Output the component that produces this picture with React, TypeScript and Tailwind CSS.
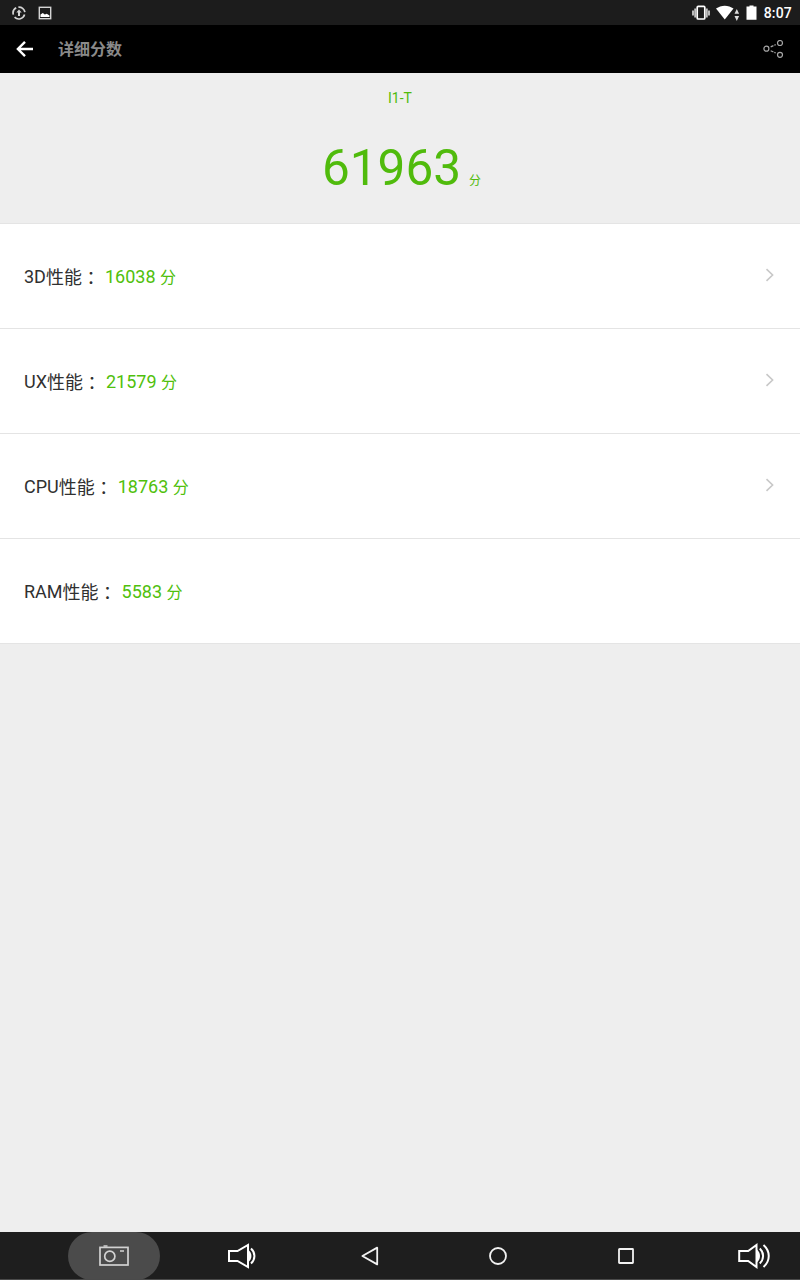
const scores = [
  { label: "3D", value: "16038", more: true },
  { label: "UX", value: "21579", more: true },
  { label: "CPU", value: "18763", more: true },
  { label: "RAM", value: "5583", more: false },
];

function StatusBar() {
  return (
    <div className="flex h-[25px] items-center justify-between bg-[#1c1c1c] text-white">
      <div className="flex items-center gap-3 pl-3">
        {/* Sync */}
        <svg width="14" height="14" viewBox="0 0 14 14" fill="none" stroke="#d4d4d4" strokeWidth="1.7">
          <path d="M1.3 8.6A6 6 0 0 1 4.2 1.8M6.4 1.1A6 6 0 0 1 12.9 6.2M12.6 8.6A6 6 0 0 1 2.6 11.2" />
          <path d="M7 10V5.5" strokeWidth="2" />
          <path d="M4.3 6.4 7 3.6l2.7 2.8z" fill="#d4d4d4" stroke="none" />
        </svg>
        {/* Picture */}
        <svg width="14" height="14" viewBox="0 0 14 14" fill="none">
          <rect x="1.3" y="1.3" width="11.4" height="11.4" stroke="#d4d4d4" strokeWidth="1.4" />
          <path d="M2.5 11V8.5L4.8 7l2 1.5 2-.7 2.7 1.7V11z" fill="#fff" />
        </svg>
      </div>
      <div className="flex items-center pr-2">
        {/* Vibrate */}
        <svg width="18" height="16" viewBox="0 0 18 16" fill="none">
          <path d="M1 5.5v5M3.2 3.5v9M14.8 3.5v9M17 5.5v5" stroke="#c4c4c4" strokeWidth="1.9" />
          <rect x="5.2" y="1.4" width="7.6" height="12.6" rx="1" stroke="#fff" strokeWidth="1.7" />
        </svg>
        {/* Wifi */}
        <svg className="ml-1.5" width="24" height="18" viewBox="0 0 24 18" fill="#fff">
          <path d="M0 4.6C5 .7 12.5 .7 17.5 4.6L8.75 15.6z" />
          <path d="M18.5 9.8 20.8 5l2.3 4.8zM18.5 12l2.3 5 2.3-5z" fill="#ddd" />
        </svg>
        {/* Battery */}
        <svg className="ml-[6px]" width="11" height="16" viewBox="0 0 11 16" fill="#fff">
          <path d="M.5 1.6h3V.4h4v1.2h3v13.2H.5z" />
        </svg>
        <span className="ml-[7px] mt-px text-[14px] leading-none font-medium tracking-[0.2px]">8:07</span>
      </div>
    </div>
  );
}

function AppBar() {
  return (
    <div className="flex h-12 items-center bg-black px-4">
      <svg width="18" height="16" viewBox="0 0 18 16" fill="none" stroke="#fff" strokeWidth="2.4">
        <path d="M17 8H2M9 .9 1.9 8 9 15.1" />
      </svg>
      <h1 className="mt-0.5 ml-6 text-[16px] leading-none font-bold text-[#8a8a8a]">详细分数</h1>
      <svg className="ml-auto" width="21" height="18" viewBox="0 0 21 18" fill="none" stroke="#a6a6a6" strokeWidth="1.2">
        <circle cx="3.4" cy="8.7" r="2.5" />
        <circle cx="17" cy="3" r="2.5" />
        <circle cx="17" cy="14.8" r="2.5" />
        <path d="M7.7 6.9l5-2.3M7.7 10.7l5 2.3" strokeDasharray="3 1" />
      </svg>
    </div>
  );
}

function NavBar() {
  return (
    <nav className="flex h-12 overflow-hidden border-b border-[#4a4a4a] bg-[#1e1e1e] pl-[50px] *:flex *:w-32 *:shrink-0 *:items-center *:justify-center">
      <button>
        <span className="flex h-12 w-[92px] items-center justify-center rounded-full bg-[#4b4b4b]">
          <svg width="30" height="22" viewBox="0 0 30 22" fill="none" stroke="#d2d2d2" strokeWidth="1.7">
            <rect x="1" y="2.4" width="28" height="17.6" />
            <circle cx="10.8" cy="11.2" r="5.1" />
            <path d="M4.5 1h4M21 6h4" />
          </svg>
        </span>
      </button>
      <button>
        <svg width="28" height="26" viewBox="0 0 28 26" fill="none" stroke="#fff" strokeWidth="2">
          <path d="M1 8h8.5L20 2v22L9.5 18H1z" />
          <path d="M20 6.5c4.6 3.5 4.6 9.5 0 13z" fill="#fff" stroke="none" />
          <path d="M23 5.5c4.6 4.2 4.6 10.8 0 15" />
        </svg>
      </button>
      <button>
        <svg width="18" height="20" viewBox="0 0 18 20" fill="none" stroke="#f2f2f2" strokeWidth="1.8" strokeLinejoin="round">
          <path d="M16.2 1.6v16.8L1.4 10z" />
        </svg>
      </button>
      <button>
        <svg width="18" height="18" viewBox="0 0 18 18" fill="none" stroke="#f2f2f2" strokeWidth="1.8">
          <circle cx="9" cy="9" r="8" />
        </svg>
      </button>
      <button>
        <svg width="16" height="16" viewBox="0 0 16 16" fill="none" stroke="#f2f2f2" strokeWidth="1.8">
          <rect x="1" y="1" width="14" height="14" rx=".5" />
        </svg>
      </button>
      <button>
        <svg width="32" height="26" viewBox="0 0 32 26" fill="none" stroke="#fff" strokeWidth="2">
          <path d="M1.2 8h9L18.5 2v22L10.2 18h-9z" />
          <path d="M19 6.5c4 3.5 4 9.5 0 13z" fill="#fff" stroke="none" />
          <path d="M21.8 5.5c4.4 4.2 4.4 10.8 0 15M25.5 2c7 6.2 7 15.8 0 22" />
        </svg>
      </button>
    </nav>
  );
}

export default function App() {
  return (
    <div className="flex h-[1280px] w-[800px] flex-col bg-[#eeeeee] font-[Roboto,'Noto_Sans_CJK_SC',sans-serif]">
      <StatusBar />
      <AppBar />

      {/* Total score */}
      <header className="flex h-[151px] flex-col items-center border-b border-[#e4e4e4] text-[#50bb0c]">
        <p className="mt-[17px] text-[14px] leading-4">I1-T</p>
        <p className="mt-8 flex items-baseline gap-2 pl-[3px] leading-[60px]">
          <span className="text-[49.5px]">61963</span>
          <span className="text-[12px]">分</span>
        </p>
      </header>

      <ul>
        {scores.map((s) => (
          <li key={s.label} className="flex h-[105px] items-center border-b border-[#e4e4e4] bg-white px-6 text-[18px]">
            <span className="text-[#303030]">
              {s.label}
              <span className="align-[-1px] leading-none">性能</span>
              <span className="align-[-2px] font-['Noto_Sans_CJK_TC',sans-serif] leading-none">：</span>
            </span>
            <span className="ml-[5px] text-[#50c00c]">
              {s.value} <span className="text-[16px]">分</span>
            </span>
            {s.more && (
              <svg className="mr-px mb-0.5 ml-auto" width="11" height="14" viewBox="0 0 11 14" fill="none" stroke="#c8c8c8" strokeWidth="1.6">
                <path d="M2.5 1.2 8.6 7l-6.1 5.8" />
              </svg>
            )}
          </li>
        ))}
      </ul>

      <div className="mt-auto">
        <NavBar />
      </div>
    </div>
  );
}
